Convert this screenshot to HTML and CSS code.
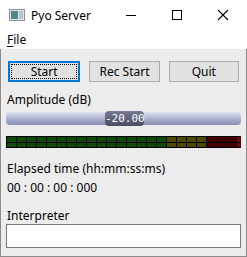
FILE: index.html
```html
<!DOCTYPE html>
<html lang="en">
<head>
    <meta charset="UTF-8">
    <title>Pyo Server</title>
    <link rel="stylesheet" href="styles.css">
</head>
<body>
    <div class="window">
        <!-- Title Bar -->
        <div class="titlebar">
            <svg class="app-icon" width="16" height="12" viewBox="0 0 16 12">
                <rect x="0.5" y="0.5" width="15" height="11" fill="#dde3e6" stroke="#8a9296"/>
                <rect x="2" y="2" width="7" height="8" fill="#4f8a86"/>
                <rect x="10" y="2" width="4" height="8" fill="#b9c2c6"/>
            </svg>
            <span class="title">Pyo Server</span>
            <div class="controls">
                <svg width="46" height="30" viewBox="0 0 46 30"><line x1="18" y1="15.5" x2="28" y2="15.5" stroke="#000"/></svg>
                <svg width="46" height="30" viewBox="0 0 46 30"><rect x="18.5" y="10.5" width="9" height="9" fill="none" stroke="#000"/></svg>
                <svg width="46" height="30" viewBox="0 0 46 30"><path d="M18 10 L28 20 M28 10 L18 20" stroke="#000" stroke-width="1.1"/></svg>
            </div>
        </div>

        <!-- Menu -->
        <div class="menubar">
            <span class="menu-item"><u>F</u>ile</span>
        </div>

        <!-- Content -->
        <main class="content">
            <div class="button-row">
                <button class="btn focused">Start</button>
                <button class="btn">Rec Start</button>
                <button class="btn">Quit</button>
            </div>

            <div class="label amp-label">Amplitude (dB)</div>
            <div class="slider">
                <div class="handle">-20.00</div>
            </div>

            <div class="meter" id="meter"></div>

            <div class="label elapsed-label">Elapsed time (hh:mm:ss:ms)</div>
            <div class="label time">00 : 00 : 00 : 000</div>

            <div class="label interp-label">Interpreter</div>
            <div class="input"></div>
        </main>
    </div>

    <script>
        // Build the two rows of the vu meter
        const meter = document.getElementById("meter");
        for (let row = 0; row < 2; row++) {
            for (let i = 0; i < 24; i++) {
                const cell = document.createElement("div");
                cell.className = "cell";
                if (i >= 20) cell.classList.add("red");
                else if (i >= 16) cell.classList.add("yellow");
                if (i === 23) cell.classList.add("last");
                meter.appendChild(cell);
            }
        }
    </script>
</body>
</html>
```

FILE: styles.css
```css
* {
    margin: 0;
    padding: 0;
    box-sizing: border-box;
}

body {
    font-family: 'Noto Sans', 'Open Sans', sans-serif;
    font-size: 12px;
    color: #000;
    background-color: #f0f0f0;
}

.window {
    width: 247px;
    height: 257px;
    background-color: #ececec;
    border: 1px solid #8c8c8c;
    border-top: none;
    display: flex;
    flex-direction: column;
}

/* Title Bar */
.titlebar {
    height: 30px;
    background-color: #fff;
    display: flex;
    align-items: center;
    margin: 0 -1px;
}

.app-icon {
    margin-left: 9px;
    margin-right: 6px;
}

.title {
    font-size: 12px;
    flex: 1;
}

.controls {
    display: flex;
    margin-right: 1px;
}

.controls svg {
    display: block;
}

/* Menu */
.menubar {
    height: 19px;
    background-color: #fff;
    padding-left: 7px;
    margin: 0 -1px;
    display: flex;
    align-items: center;
}

.menu-item u {
    text-underline-offset: 2px;
}

/* Content */
.content {
    padding: 12px 5px 0 5px;
    display: flex;
    flex-direction: column;
}

.button-row {
    display: flex;
    gap: 9px;
    padding: 0 2px;
}

.btn {
    flex: 1;
    height: 21px;
    font-family: inherit;
    font-size: 12px;
    background-color: #e1e1e1;
    border: 1px solid #adadad;
    color: #000;
}

.btn.focused {
    border: 2px solid #0078d7;
    outline: 1px dotted #000;
    outline-offset: -4px;
}

.label {
    line-height: 16px;
    padding-left: 1px;
}

.amp-label {
    margin-top: 10px;
}

/* Amplitude slider */
.slider {
    margin-top: 4px;
    height: 13px;
    border-radius: 4px;
    background: linear-gradient(#dfe2f0, #a9aecd 55%, #8a8fb2);
    position: relative;
}

.handle {
    position: absolute;
    left: 99px;
    top: -1px;
    width: 39px;
    height: 15px;
    border-radius: 4px;
    background: linear-gradient(#757a90, #4a4e60);
    color: #fff;
    font-family: 'DejaVu Sans Mono', monospace;
    font-size: 11px;
    line-height: 15px;
    text-align: center;
}

/* VU meter */
.meter {
    margin-top: 11px;
    height: 12px;
    background-color: #000;
    padding: 1px;
    display: grid;
    grid-template-columns: repeat(23, 10px) 4px;
    grid-template-rows: 1fr 1fr;
    gap: 1px 0;
    overflow: hidden;
}

.cell {
    background-color: #0f4a08;
    border-right: 1px solid #000;
}

.cell.yellow {
    background-color: #4d4a04;
}

.cell.red {
    background-color: #440000;
}

.cell.last {
    background-color: #7a0505;
    border-right: none;
}

.elapsed-label {
    margin-top: 13px;
}

.time {
    margin-top: 3px;
}

.interp-label {
    margin-top: 12px;
}

.input {
    margin-top: 0;
    height: 24px;
    background-color: #fff;
    border: 1px solid #7a7a7a;
}
```
